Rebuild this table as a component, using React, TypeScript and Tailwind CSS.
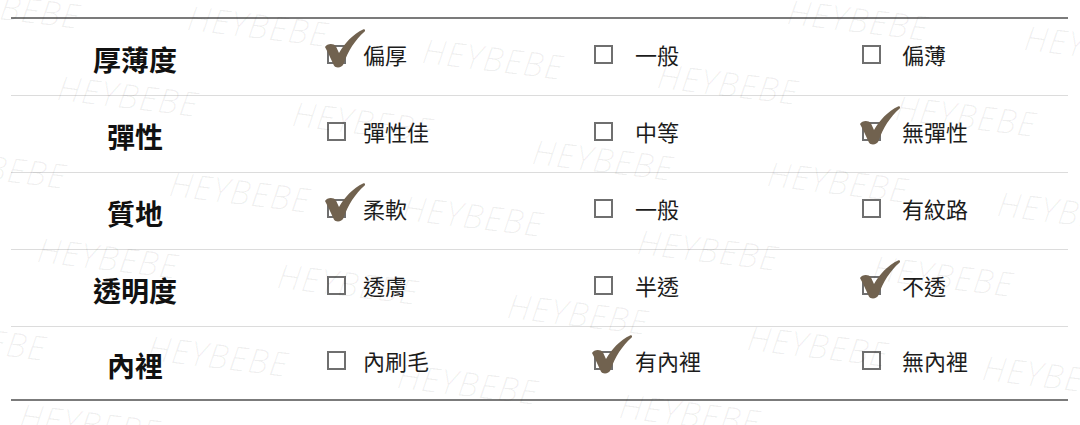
import React from "react";

type Row = { label: string; options: string[]; checked: number };

const rows: Row[] = [
	{ label: "厚薄度", options: ["偏厚", "一般", "偏薄"], checked: 0 },
	{ label: "彈性", options: ["彈性佳", "中等", "無彈性"], checked: 2 },
	{ label: "質地", options: ["柔軟", "一般", "有紋路"], checked: 0 },
	{ label: "透明度", options: ["透膚", "半透", "不透"], checked: 2 },
	{ label: "內裡", options: ["內刷毛", "有內裡", "無內裡"], checked: 1 },
];

// gap between box and text, per column
const textGap = ["ml-[17px]", "ml-[22px]", "ml-[21px]"];

// watermark spots [left, top]
const marks: [number, number][] = [
	[-58, -18], [190, 0], [425, 33], [660, 58], [790, -6], [1027, 20],
	[60, 70], [295, 96], [535, 134], [898, 90], [-72, 142],
	[172, 166], [405, 190], [770, 156], [1000, 186],
	[40, 232], [640, 224], [280, 258], [510, 288], [875, 250], [-92, 314],
	[150, 330], [400, 358], [750, 320], [985, 350], [22, 398], [622, 388],
];

function Check() {
	return (
		<svg
			className="absolute left-[-4px] top-[-18px] w-[41px] h-[40px]"
			viewBox="0 0 41 40"
		>
			<path
				fill="#71624f"
				d="M0 18 C2 14.5 8.5 14 11 17.5 L14 24 C20 14 27.5 5.5 38.5 0.3 C40 -0.3 40.6 1.8 39.4 2.8 C30.5 10.5 23 22 18.5 35 C17 39 10.5 39.7 8.8 36.2 C6 30 3.5 24.5 0 18 Z"
			/>
		</svg>
	);
}

function Option({ text, checked, col }: { text: string; checked: boolean; col: number }) {
	return (
		<div className="flex items-center pl-[68px] pb-[6px]">
			<span className="relative w-[19px] h-[19px] border-2 border-[#6f6f6f] bg-white shrink-0">
				{checked && <Check />}
			</span>
			<span className={`${textGap[col]} text-[22px] leading-none text-[#1c1c1c]`}>{text}</span>
		</div>
	);
}

export default function App() {
	return (
		<div className="relative w-[1080px] h-[425px] overflow-hidden bg-white font-['Noto_Sans_CJK_TC','Noto_Sans',sans-serif]">
			<div className="pt-[17px] pl-[11px] pr-[12px]">
				<div className="border-t-2 border-b-2 border-[#7b7b7b]">
					{rows.map((row, i) => (
						<div
							key={row.label}
							className={`grid grid-cols-[248px_267px_268px_1fr] ${
								i < rows.length - 1 ? "h-[77px] border-b border-[#dcdcdc]" : "h-[72px]"
							}`}
						>
							<div className="flex items-center justify-center pt-[4px] text-[28px] font-bold leading-none text-[#111]">
								{row.label}
							</div>
							{row.options.map((opt, j) => (
								<Option key={opt + j} text={opt} checked={row.checked === j} col={j} />
							))}
						</div>
					))}
				</div>
			</div>

			<div className="pointer-events-none absolute inset-0">
				{marks.map(([x, y], i) => (
					<span
						key={i}
						className="absolute origin-top-left rotate-[7deg] font-['Open_Sans',sans-serif] italic font-light text-[34px] leading-none tracking-[1px] text-black/[0.06]"
						style={{ left: x, top: y }}
					>
						HEYBEBE
					</span>
				))}
			</div>
		</div>
	);
}
